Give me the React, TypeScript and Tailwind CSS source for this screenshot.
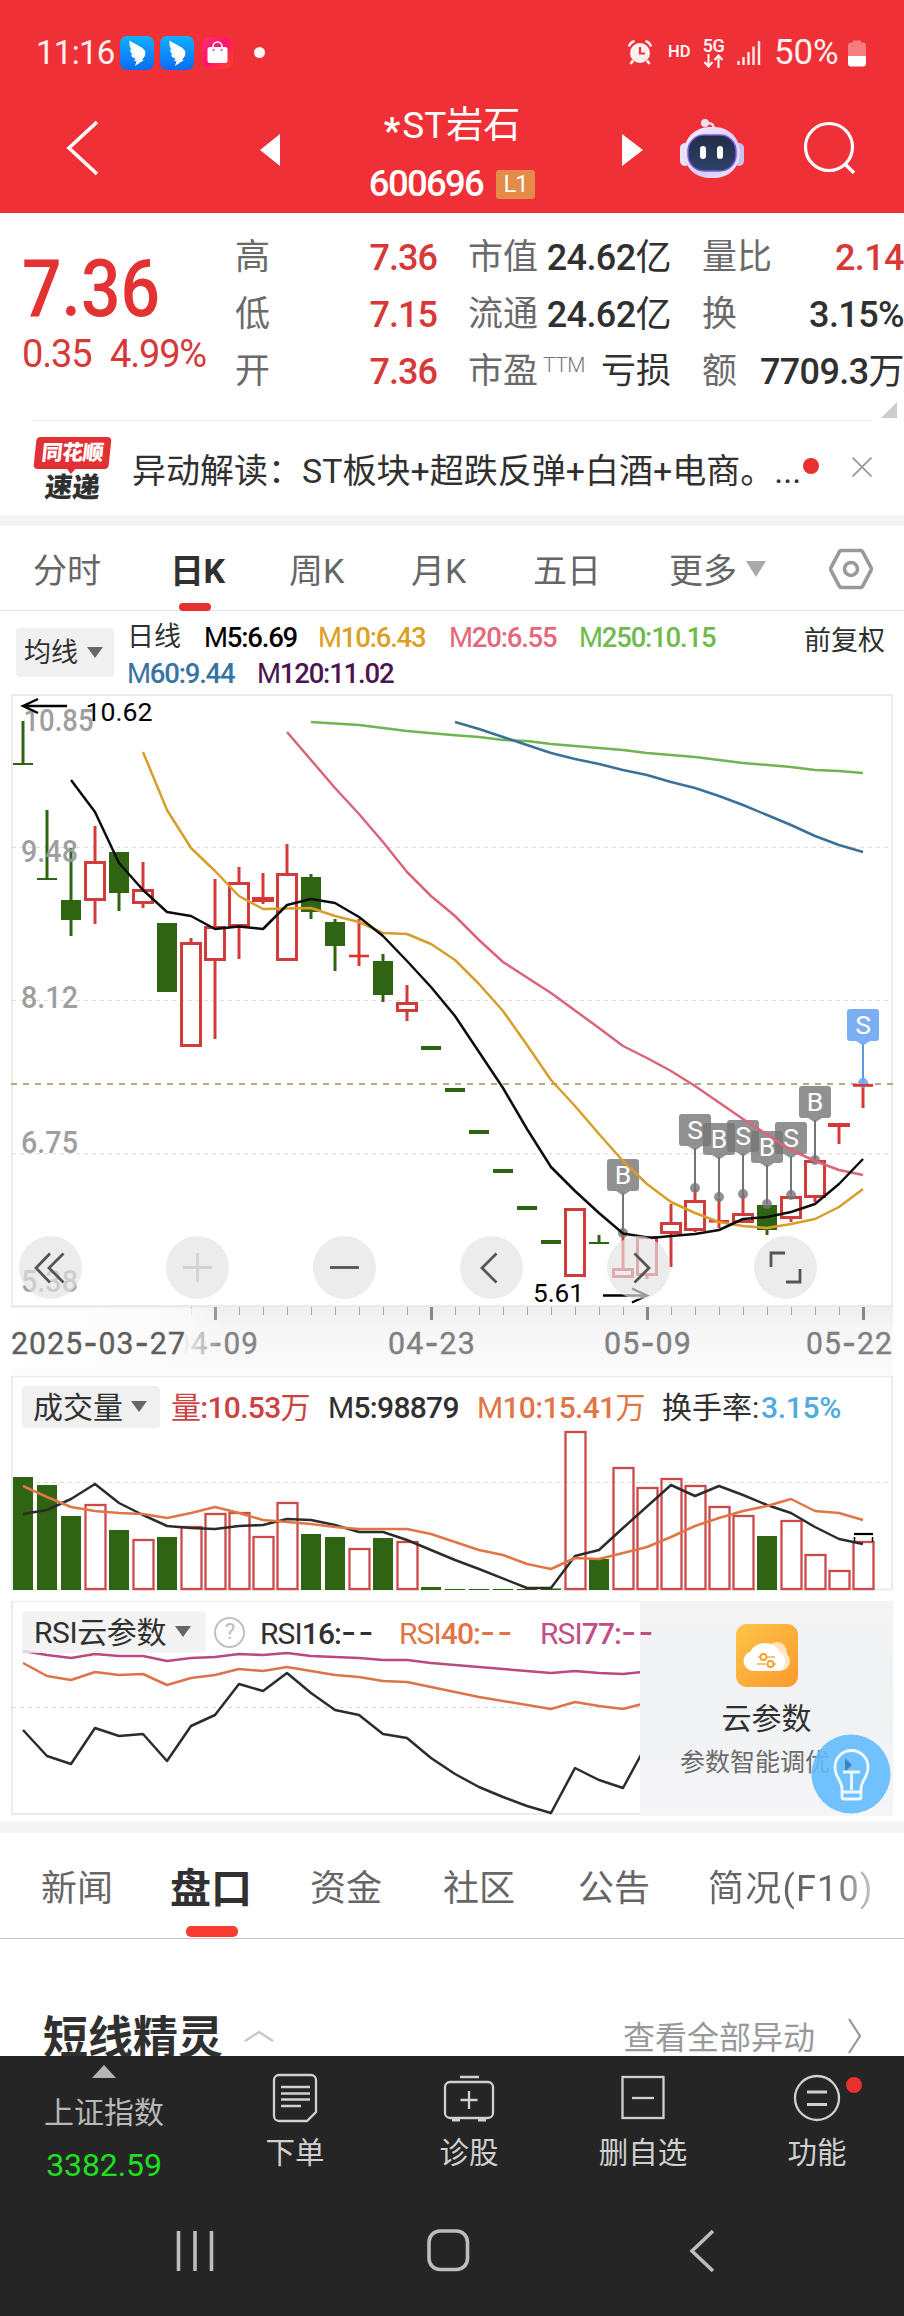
import React from 'react';

const FONT = "font-['Roboto','Noto_Sans_CJK_SC',sans-serif]";
const RED = '#d03c3c';
const GREEN = '#2f6413';
const cx = (i: number) => 23 + 24 * i;

type Candle = { k: 'g' | 'r' | 'f'; hi: number; lo: number; t: number; b: number };
const c = (k: Candle['k'], hi: number, lo: number, t: number, b: number): Candle => ({ k, hi, lo, t, b });

/* k: g = filled green, r = hollow red, f = filled red */
const candles: Candle[] = [
  c('g', 721, 764, 763, 765), c('g', 810, 879, 878, 880), c('g', 848, 936, 900, 920), c('r', 826, 924, 861, 901),
  c('g', 852, 911, 852, 893), c('r', 862, 908, 889, 904), c('g', 923, 992, 923, 992), c('r', 938, 1047, 942, 1047),
  c('r', 879, 1039, 926, 961), c('r', 867, 959, 882, 927), c('f', 873, 904, 897, 902), c('r', 844, 961, 873, 961),
  c('g', 874, 919, 877, 912), c('g', 919, 971, 922, 946), c('f', 919, 966, 954.7, 957.3), c('g', 954, 1002, 961, 995),
  c('r', 985, 1021, 1002, 1012), c('g', 1046, 1050, 1046, 1050), c('g', 1088, 1092, 1088, 1092), c('g', 1130, 1134, 1130, 1134),
  c('g', 1169, 1173, 1169, 1173), c('g', 1206, 1210, 1206, 1210), c('g', 1240, 1244, 1240, 1244), c('r', 1208, 1277, 1208, 1277),
  c('g', 1235, 1244, 1242, 1244), c('r', 1235, 1278, 1268, 1278), c('r', 1236, 1279, 1236, 1276), c('r', 1204, 1267, 1222, 1234),
  c('r', 1188, 1232, 1200, 1231), c('f', 1198, 1228, 1220, 1222.5), c('r', 1194, 1223, 1213, 1223), c('g', 1205, 1235, 1205, 1230),
  c('r', 1196, 1222, 1196, 1219), c('r', 1160, 1202, 1160, 1198), c('f', 1123, 1144, 1123, 1127), c('f', 1084, 1108, 1084, 1086.5),
];

const volumes: [string, number][] = [
  ['g', 1477], ['g', 1485], ['g', 1516], ['r', 1504], ['g', 1530], ['r', 1539], ['g', 1537], ['r', 1526], ['r', 1513],
  ['r', 1512], ['r', 1536], ['r', 1502], ['g', 1534], ['g', 1537], ['r', 1548], ['g', 1538], ['r', 1541], ['g', 1587],
  ['g', 1589], ['g', 1589], ['g', 1589], ['g', 1589], ['g', 1588.5], ['r', 1431], ['g', 1559], ['r', 1467], ['r', 1487],
  ['r', 1478], ['r', 1485], ['r', 1506], ['r', 1515], ['g', 1536], ['r', 1520], ['r', 1554], ['r', 1570], ['r', 1541],
];

const markers: [string, number, number, number][] = [
  ['B', 623, 1159, 1233], ['S', 695, 1114, 1188], ['B', 719, 1123, 1197], ['S', 743, 1120, 1194],
  ['B', 767, 1131, 1204], ['S', 791, 1122, 1195], ['B', 815, 1086, 1160],
];

const Line = ({ p, s, w = 2.5 }: { p: string; s: string; w?: number }) => (
  <polyline points={p} fill="none" stroke={s} strokeWidth={w} strokeLinejoin="round" />
);

function CandleShape({ d, i }: { d: Candle; i: number }) {
  const x = cx(i);
  const col = d.k === 'g' ? GREEN : d.k === 'f' ? '#d93636' : RED;
  return (
    <g>
      <line x1={x} x2={x} y1={d.hi} y2={d.k === 'r' ? d.t : d.lo} stroke={col} strokeWidth="3" />
      {d.k === 'r' && <line x1={x} x2={x} y1={d.b} y2={d.lo} stroke={col} strokeWidth="3" />}
      {d.k === 'r' ? (
        <rect x={x - 9.5} y={d.t + 1.5} width="19" height={d.b - d.t - 3} fill="none" stroke={col} strokeWidth="3" />
      ) : (
        <rect x={x - (i === 10 || i === 34 ? 11 : 10)} y={d.t} width={i === 10 || i === 34 ? 22 : 20} height={d.b - d.t} fill={col} />
      )}
    </g>
  );
}

function Marker({ m, fill, stem }: { m: [string, number, number, number]; fill: string; stem: string }) {
  const [ch, x, y, dot] = m;
  return (
    <g>
      <line x1={x} x2={x} y1={y + 34} y2={dot} stroke={stem} strokeWidth="1.8" />
      <circle cx={x} cy={dot} r="5" fill={fill} />
      <path d={`M${x - 13} ${y}h26a3 3 0 0 1 3 3v26a3 3 0 0 1-3 3h-6l-7 4.500l-7-4.500h-6a3 3 0 0 1-3-3v-26a3 3 0 0 1 3-3z`} fill={fill} />
      <text x={x} y={y + 25} textAnchor="middle" fontSize="26.5" fill="#fff">{ch}</text>
    </g>
  );
}

function Label({ x, y, w, size, fill, children, weight = 500 }: { x: number; y: number; w: number; size: number; fill: string; children: string; weight?: number }) {
  return <text x={x} y={y} textLength={w} lengthAdjust="spacingAndGlyphs" fontSize={size} fill={fill} fontWeight={weight}>{children}</text>;
}

function DateLabel({ x, y, w, fill, parts, weight = 400 }: { x: number; y: number; w: number; fill: string; parts: string[]; weight?: number }) {
  return (
    <text x={x} y={y} textLength={w} lengthAdjust="spacingAndGlyphs" fontSize="32" fill={fill} fontWeight={weight} stroke={fill} strokeWidth=".4" letterSpacing="1.2">
      {parts.map((p, i) => (
        <React.Fragment key={i}>
          {i > 0 && <tspan fontFamily="Inter" fontWeight="500">-</tspan>}
          {p}
        </React.Fragment>
      ))}
    </text>
  );
}

const Down = ({ className, fill = '#666' }: { className: string; fill?: string }) => (
  <svg className={className} viewBox="0 0 16 12" preserveAspectRatio="none"><path d="M0 0h16L8 12z" fill={fill} /></svg>
);

/* Figures are set in medium weight, the unit characters in regular. */
const Num = ({ v }: { v: string }) => (
  <>
    {v.split(/([\u4e00-\u9fff]+)/).filter(Boolean).map((p, i) => (
      <span key={i} className={/[\u4e00-\u9fff]/.test(p) ? 'font-normal' : 'font-medium'}>{p}</span>
    ))}
  </>
);

const Bird = ({ className }: { className: string }) => (
  <svg className={className} viewBox="0 0 34 34">
    <defs><linearGradient id="sky" x1="0" y1="0" x2="0" y2="1"><stop stopColor="#10b0ff" /><stop offset="1" stopColor="#0a6bf5" /></linearGradient></defs>
    <rect width="34" height="34" rx="7" fill="url(#sky)" />
    <path d="M9.500 4.500C14 8 20 9.500 23.500 13c2 2 2.500 4 1.300 7L22 24h2l-9 6 1.500-5h-2.500l1.500-2.500c-3-.5-4-2-4.500-4l2 .3c-2-1.600-3-3.300-3-5.300l1.800.8C9.800 11.500 9 8 9.500 4.500z" fill="#fff" />
  </svg>
);

function StatusBar() {
  return (
    <div className="flex h-[95px] items-center pt-[10px] text-white">
      <span className="ml-[36px] w-[84px] text-[33px] leading-none tracking-[-0.700px] text-[#fff0f0]">11:16</span>
      <Bird className="h-[34px] w-[34px]" />
      <Bird className="ml-[6px] h-[34px] w-[34px]" />
      <svg className="ml-[8px] h-[32px] w-[31px]" viewBox="0 0 31 32">
        <defs><linearGradient id="bag" x1="0" y1="0" x2="1" y2="1"><stop stopColor="#ff2d78" /><stop offset=".5" stopColor="#ff1466" /><stop offset="1" stopColor="#ff4a1c" /></linearGradient></defs>
        <rect width="31" height="32" rx="9" fill="url(#bag)" />
        <path d="M11 12V9.500a4.500 4.500 0 0 1 9 0V12" fill="none" stroke="#fff" strokeWidth="1.600" />
        <rect x="5.500" y="10" width="20" height="16" rx="2.500" fill="#fff" />
        <circle cx="11.500" cy="13" r="1" fill="#f36" /><circle cx="19.500" cy="13" r="1" fill="#f36" />
      </svg>
      <span className="ml-[21px] h-[11px] w-[11px] rounded-full bg-[#fff3f3]" />
      <svg className="ml-[362px] h-[27px] w-[26px]" viewBox="0 0 26 27">
        <circle cx="13" cy="14" r="10" fill="#fff0f0" />
        <path d="M2 7.500A8 8 0 0 1 7.500 2M24 7.500A8 8 0 0 0 18.500 2M6 21.500 3.500 25M20 21.500 22.500 25" stroke="#fff0f0" strokeWidth="2.600" fill="none" />
        <path d="M13 8v6.500h5" stroke="#f03037" strokeWidth="2.200" fill="none" />
      </svg>
      <span className="ml-[15px] w-[34px] text-[16.500px] font-medium leading-none">HD</span>
      <span className="flex w-[23px] flex-col items-center">
        <span className="text-[18px] font-medium leading-[17px] tracking-[-0.500px]">5G</span>
        <svg className="h-[14px] w-[21px]" viewBox="0 0 21 14"><path d="M5.500 0v12M1.500 8l4 4.500 4-4.500M15.500 14V2M11.500 6l4-4.500 4 4.500" stroke="#fff" strokeWidth="2" fill="none" /></svg>
      </span>
      <svg className="ml-[12px] h-[25px] w-[25px]" viewBox="0 0 25 25"><path d="M1.500 21v4M6.500 17v8M11.500 12v13M16.500 6.500V25M22 1v24" stroke="#ffecec" strokeWidth="2.400" /></svg>
      <span className="ml-[12px] w-[74px] text-[35px] leading-none tracking-[-0.200px] text-[#fff0f0]">50%</span>
      <svg className="h-[28px] w-[18px]" viewBox="0 0 18 28">
        <path d="M5 3.500V1.500h8v2h2a3 3 0 0 1 3 3V17H0V6.500a3 3 0 0 1 3-3z" fill="#f67c80" />
        <path d="M0 17h18v7.500a3 3 0 0 1-3 3H3a3 3 0 0 1-3-3z" fill="#fff" />
      </svg>
    </div>
  );
}

function Header() {
  return (
    <header className="h-[213px] bg-[#f03037]">
      <StatusBar />
      <div className="flex h-[106px] items-center text-white">
        <svg className="ml-[66px] h-[56px] w-[33px]" viewBox="0 0 33 56"><path d="M31 2 3 28l28 26" fill="none" stroke="#fff" strokeWidth="3.600" /></svg>
        <svg className="ml-[161px] mt-[4px] h-[32px] w-[20px]" viewBox="0 0 20 32"><path d="M20 0v32L0 16z" fill="#fff" /></svg>
        <div className="ml-[80px] flex w-[184px] flex-col items-center self-start">
          <div className="flex h-[60px] items-center text-[37px] leading-none"><span className="mr-[2px] mt-[11px] text-[36px] font-bold">*</span>ST岩石</div>
          <div className="flex h-[58px] items-center">
            <span className="text-[36.500px] font-medium leading-none tracking-[-1.700px]">600696</span>
            <span className="ml-[13px] flex h-[29px] w-[39px] items-center justify-center rounded-[3px] bg-[#e38b48] text-[24px] leading-none tracking-[-1px]">L1</span>
          </div>
        </div>
        <svg className="ml-[78px] mt-[4px] h-[32px] w-[21px]" viewBox="0 0 21 32"><path d="M0 0v32l21-16z" fill="#fff" /></svg>
        <svg className="ml-[37px] h-[60px] w-[64px]" viewBox="0 0 64 60">
          <defs>
            <linearGradient id="shell" x1="0" y1="0" x2="1" y2="1"><stop stopColor="#f7f2ff" /><stop offset=".6" stopColor="#d9cdf7" /><stop offset="1" stopColor="#eceaff" /></linearGradient>
            <linearGradient id="visor" x1="0" y1="0" x2="0" y2="1"><stop stopColor="#232c48" /><stop offset="1" stopColor="#2c4468" /></linearGradient>
          </defs>
          <path d="M33 11c1.500-4-1-6-6-6" fill="none" stroke="#ead9f5" strokeWidth="2.500" /><circle cx="25" cy="5" r="4" fill="#f1def0" />
          <rect x="0" y="25" width="10" height="23" rx="5" fill="#e9e2fb" /><rect x="54" y="25" width="10" height="23" rx="5" fill="#c9bff2" />
          <rect x="4" y="9" width="56" height="51" rx="25" fill="url(#shell)" />
          <rect x="8" y="17" width="48" height="36" rx="16" fill="url(#visor)" stroke="#7a5be0" strokeWidth="1.500" />
          <rect x="20" y="28" width="6" height="13" rx="3" fill="#fff" /><rect x="37" y="28" width="6" height="13" rx="3" fill="#fff" />
        </svg>
        <svg className="ml-[59px] h-[54px] w-[54px]" viewBox="0 0 54 54"><circle cx="26" cy="26" r="23.500" fill="none" stroke="#fff" strokeWidth="3.200" /><path d="m42 43 9 9" stroke="#fff" strokeWidth="3.600" /></svg>
      </div>
    </header>
  );
}

const statRows: [string, string, string, string, string, string, string][] = [
  ['高', '7.36', '市值', '24.62亿', '量比', '2.14', 'text-[#d73838]'],
  ['低', '7.15', '流通', '24.62亿', '换', '3.15%', 'text-[#303030]'],
  ['开', '7.36', '市盈', '亏损', '额', '7709.3万', 'text-[#303030]'],
];

function Quote() {
  return (
    <section className="flex h-[207px] text-[35px] leading-none">
      <div className="w-[235px] pl-[22px] pt-[35px] text-[#e23232]">
        <div className="h-[82px] origin-left scale-x-[0.865] text-[80.500px] font-medium leading-[82px]">7.36</div>
        <div className="mt-[3px] flex text-[38px] leading-[42px] tracking-[-1.200px] text-[#d73838]"><span className="w-[88px]">0.35</span><span>4.99%</span></div>
      </div>
      <div className="w-[669px] pt-[16px]">
        {statRows.map((r, i) => (
          <div key={i} className="flex h-[57px] items-center">
            <span className="w-[101px] text-[#6a6a6a]">{r[0]}</span>
            <span className="w-[101px] text-right text-[36px] font-medium tracking-[-1px] text-[#d73838]">{r[1]}</span>
            <span className="ml-[31px] w-[75px] text-[#6a6a6a]">{r[2]}</span>
            {i === 2 && <span className="mb-[12px] w-[38px] text-[21px] font-light tracking-[-0.500px] text-[#777]">TTM</span>}
            <span className={i === 2 ? 'w-[90px] text-right text-[#303030]' : 'flex w-[128px] justify-end text-[36px] tracking-[-0.600px] text-[#303030]'}><Num v={r[3]} /></span>
            <span className="ml-[31px] w-[72px] shrink-0 text-[#6a6a6a]">{r[4]}</span>
            <span className={`${r[6]} flex w-[130px] justify-end text-[36px] tracking-[-0.600px]`}><Num v={r[5]} /></span>
          </div>
        ))}
        <svg className="ml-[646px] mt-[2px] h-[16px] w-[16px]" viewBox="0 0 16 16"><path d="M16 0v16H0z" fill="#ccc" /></svg>
      </div>
    </section>
  );
}

function News() {
  return (
    <section className="mx-[32px] flex h-[95px] items-center border-t border-[#ececec] pt-[5px] text-[34px] text-[#303030]">
      <div className="flex w-[80px] flex-col items-center pb-[4px]">
        <div className="relative flex h-[32px] w-[75px] -skew-x-6 items-center justify-center rounded-[4px] bg-[#e23135] text-[21px] font-black leading-none tracking-[-0.500px] text-white">
          同花顺
          <svg className="absolute left-[33px] top-[31px] h-[6px] w-[10px]" viewBox="0 0 10 6"><path d="M0 0h10L5 6z" fill="#e23135" /></svg>
        </div>
        <div className="mt-[5px] -skew-x-6 text-[27.500px] font-black leading-[27px]">速递</div>
      </div>
      <span className="ml-[20px] w-[671px] leading-none">异动解读：ST板块+超跌反弹+白酒+电商。...</span>
      <span className="mb-[9px] h-[16px] w-[16px] shrink-0 rounded-full bg-[#e83030]" />
      <svg className="mb-[7px] ml-[33px] h-[20px] w-[20px] shrink-0" viewBox="0 0 20 20"><path d="m.5.5 19 19M19.500.5l-19 19" stroke="#999" strokeWidth="1.800" /></svg>
    </section>
  );
}

function PeriodTabs() {
  return (
    <nav className="flex h-[85px] items-center border-b border-[#e4e4e4] pb-0 pt-[6px] text-[34px] leading-none text-[#666]">
      <span className="ml-[33px] w-[137px]">分时</span>
      <span className="relative w-[119px] font-bold tracking-[-0.500px] text-[#303030]">日K<i className="absolute left-[9px] top-[49px] h-[8px] w-[32px] rounded-[4px] bg-[#e63131]" /></span>
      <span className="w-[122px]">周K</span>
      <span className="w-[122px]">月K</span>
      <span className="w-[136px]">五日</span>
      <span className="w-[77px]">更多</span>
      <Down className="mb-[5px] h-[16px] w-[20px]" fill="#aaa" />
      <svg className="mb-[4px] ml-[63px] h-[42px] w-[44px]" viewBox="0 0 44 42"><path d="M12.500 2.500h19a2.500 2.500 0 0 1 2.200 1.300L42 19.700a2.500 2.500 0 0 1 0 2.600l-8.300 15.900a2.500 2.500 0 0 1-2.200 1.300h-19a2.500 2.500 0 0 1-2.200-1.300L2 22.300a2.500 2.500 0 0 1 0-2.600l8.300-15.900a2.500 2.500 0 0 1 2.200-1.300z" fill="none" stroke="#999" strokeWidth="3.600" /><circle cx="22" cy="21" r="6.500" fill="none" stroke="#999" strokeWidth="3.600" /></svg>
    </nav>
  );
}

const Ma = ({ n, v, className }: { n: string; v: string; className: string }) => (
  <span className={className}>{n}<b className="font-medium">{v}</b></span>
);

function MaRow() {
  return (
    <section className="flex h-[83px] text-[27.500px] leading-none tracking-[-1.200px]">
      <div className="ml-[16px] mt-[17px] flex h-[49px] w-[98px] items-center rounded-[4px] bg-[#f0f0f0] pl-[8px] pt-[1px] text-[27px] tracking-normal text-[#303030]">均线<Down className="mb-[2px] ml-[9px] h-[11px] w-[16px]" /></div>
      <div className="ml-[13px] w-[677px]">
        <div className="flex h-[36px] items-center pt-[17px]">
          <span className="w-[77px] text-[27px] tracking-normal text-[#303030]">日线</span>
          <Ma n="M" v="5:6.69" className="w-[114px] text-black" />
          <Ma n="M" v="10:6.43" className="w-[131px] text-[#dc9f26]" />
          <Ma n="M" v="20:6.55" className="w-[130px] text-[#e4687a]" />
          <Ma n="M" v="250:10.15" className="text-[#6dbb4c]" />
        </div>
        <div className="flex h-[36px] items-center pt-[17px]">
          <Ma n="M" v="60:9.44" className="w-[130px] text-[#3674a3]" />
          <Ma n="M" v="120:11.02" className="text-[#4d154f]" />
        </div>
      </div>
      <span className="pt-[17px] text-[27px] tracking-normal text-[#303030]">前复权</span>
    </section>
  );
}

function KChart() {
  const cy = 1267.5;
  return (
    <svg className="block h-[682px] w-[904px]" viewBox="0 694 904 682">
      <defs>
        <linearGradient id="axis" x1="0" y1="0" x2="0" y2="1"><stop stopColor="#efefef" /><stop offset=".35" stopColor="#f6f6f6" /><stop offset="1" stopColor="#fbfbfb" /></linearGradient>
        <linearGradient id="fade" x1="0" y1="0" x2="1" y2="0"><stop stopColor="#fff" /><stop offset=".81" stopColor="#fafafa" /><stop offset="1" stopColor="#fafafa" stopOpacity="0" /></linearGradient>
      </defs>
      <rect x="12" y="1307" width="881" height="69" fill="url(#axis)" />
      <rect x="12" y="695" width="880" height="611" fill="#fff" stroke="#ebebeb" strokeWidth="2" />
      <path d="M12 847.300H892M12 1000.500H892M12 1153.700H892" stroke="#dfdfdf" strokeWidth="1.200" strokeDasharray="4 4" />
      <path d="M11 1084H893" stroke="#b8a987" strokeWidth="1.800" strokeDasharray="6 6" />
      {candles.map((d, i) => <CandleShape key={i} d={d} i={i} />)}
      {markers.map((m, i) => <Marker key={i} m={m} fill="rgba(118,118,118,.8)" stem="#666" />)}
      <Marker m={['S', 863, 1009, 1083]} fill="rgba(112,168,240,.92)" stem="#4d90d8" />
      <path d="M853 1085.300h20" stroke="#d93636" strokeWidth="2.600" />
      <Line s="#6fb551" p="311,722 335,723.500 359,725 383,728 407,731 452,735 479,737 503,740 527,741 551,744 599,748 623,750 647,753 695,757 743,763 791,767 815,770 839,771 863,773" />
      <Line s="#3a719b" p="455,722 479,729 503,737 527,745 551,753 575,759 599,764 623,770 647,775 671,782 695,788 719,796 743,805 767,815 791,825 815,836 839,845 863,852" />
      <Line s="#d9657a" p="287,732 311,760 335,788 359,814 383,842 407,872 431,896 455,916 479,940 503,962 551,993 599,1028 623,1046 647,1058 671,1071 695,1086 743,1119 791,1150 815,1161 839,1170 863,1175" />
      <Line s="#d79e2a" p="143,752 167,810 191,848 215,871 239,896 263,909 311,908 335,916 359,922 383,933 407,934 431,944 455,960 479,984 503,1011 527,1045 551,1080 575,1106 599,1134 623,1161 647,1184 671,1202 695,1213 719,1222 743,1226 767,1228 791,1224 815,1219 839,1207 863,1189" />
      <Line s="#0d0d0d" p="71,780 95,812 119,863 143,890 167,912 191,916 215,929 239,926.500 263,929 287,905 311,899 335,903 359,917 383,936 407,961 431,987 455,1016 479,1052 503,1088 527,1129 551,1167 575,1191 599,1213 623,1233.500 651,1238 671,1236 695,1234 719,1230 743,1219 767,1217 791,1212 815,1204 839,1184 863,1159" />
      <g fillOpacity=".95">
        <Label x={23.500} y={731} w={70} size={31} fill="#999">10.85</Label>
        <Label x={21} y={862} w={57} size={31} fill="#999">9.48</Label>
        <Label x={21} y={1008} w={57} size={31} fill="#999">8.12</Label>
        <Label x={21} y={1153} w={57} size={31} fill="#999">6.75</Label>
        <Label x={21} y={1292} w={57} size={31} fill="#999">5.38</Label>
      </g>
      <Label x={85.500} y={721} w={67} size={26.500} fill="#000" weight={400}>10.62</Label>
      <path d="M67 706H24M38 699 23 706l15 7" fill="none" stroke="#000" strokeWidth="2.400" />
      <Label x={533} y={1302} w={51} size={26.500} fill="#000" weight={400}>5.61</Label>
      <path d="M603 1295.500h43M632 1288.500l15 7-15 7" fill="none" stroke="#000" strokeWidth="2.400" />
      {[50.500, 197.500, 344.500, 491.500, 638.500, 785.500].map((x) => <circle key={x} cx={x} cy={cy} r="31.500" fill="rgba(227,227,227,.68)" />)}
      <g fill="none" stroke="#555" strokeWidth="2.800">
        <path d="M50 1253.500 36 1268l14 14.500M63.500 1253.500 49 1268l14.500 14.500" />
        <path d="M330 1267.500h29" />
        <path d="M496.500 1253.500 482 1268l14.500 14.500" />
        <path d="M634.500 1253.500 649 1268l-14.500 14.500" />
        <path d="M771 1267v-14h14M800 1269v13h-14" />
        <path d="M183 1267.500h29M197.500 1253v29" stroke="#d2d2d2" />
      </g>
      {Array.from({ length: 29 }, (_, k) => 7 + k).map((i) => {
        const major = (i - 8) % 9 === 0;
        return <line key={i} x1={cx(i) + 0.500} x2={cx(i) + 0.500} y1="1307" y2={major ? 1320 : 1315} stroke={major ? '#888' : '#a5a5a5'} strokeWidth={major ? 3 : 1} />;
      })}
      <DateLabel x={173} y={1354} w={86} fill="#858585" parts={['04', '09']} />
      <rect x="12" y="1308" width="212" height="60" fill="url(#fade)" fillOpacity=".97" />
      <DateLabel x={11} y={1354} w={175} fill="#5f5f5f" parts={['2025', '03', '27']} />
      <line x1="215.500" x2="215.500" y1="1307" y2="1320" stroke="#999" strokeWidth="3" />
      <DateLabel x={388} y={1354} w={88} fill="#808080" parts={['04', '23']} />
      <DateLabel x={604} y={1354} w={88} fill="#808080" parts={['05', '09']} />
      <DateLabel x={806} y={1354} w={87} fill="#808080" parts={['05', '22']} />
    </svg>
  );
}

function VolumePanel() {
  return (
    <section className="relative h-[225px]">
      <svg className="absolute left-0 top-0 h-[216px] w-[904px]" viewBox="0 1376 904 216">
        <rect x="12" y="1376" width="880" height="213.500" fill="#fff" stroke="#ebebeb" strokeWidth="2" />
        <path d="M12 1482.500H892" stroke="#dcdcdc" strokeWidth="1.200" strokeDasharray="4 4" />
        {volumes.map(([k, t], i) => k === 'g'
          ? <rect key={i} x={cx(i) - 10} y={t} width="20" height={1590 - t} fill={GREEN} />
          : <rect key={i} x={cx(i) - 9.500} y={t + 1} width="20" height={1588 - t} fill="none" stroke="#cd4a4a" strokeWidth="2.300" />)}
        <path d="M854 1534h19" stroke="#000" strokeWidth="2.200" /><path d="M854.500 1537v5M872.500 1537v5" stroke="#000" strokeWidth="1.500" />
        <Line s="#2c2c2c" p="23,1514 47,1510 71,1499 95,1484 119,1503 143,1515 167,1526 191,1528 215,1529 239,1526 263,1525 287,1519 311,1520 335,1525 359,1532 383,1532 407,1540 455,1560 479,1569 527,1588 551,1588 575,1556 599,1550 623,1528 671,1485 695,1496 719,1486 743,1495 767,1505 791,1513 815,1527 839,1539 863,1544" />
        <Line s="#e07545" p="23,1486 47,1497 71,1507 95,1511 119,1513 143,1514 167,1518 191,1513 215,1507 239,1513 263,1520 311,1524 335,1527 359,1529 407,1529 431,1534 455,1542 479,1550 503,1555 527,1564 551,1569 575,1558 599,1559 623,1553 647,1547 671,1537 695,1526 719,1518 743,1511 767,1506 791,1499 815,1511 839,1513 863,1520" />
      </svg>
      <div className="relative flex pt-[10px] text-[30px] leading-none text-[#303030]">
        <div className="ml-[22px] flex h-[42px] w-[138px] items-center rounded-[4px] bg-[#f0f0f0] pl-[11px] pt-[1px]">成交量<Down className="mb-[2px] ml-[8px] h-[11px] w-[16px]" /></div>
        <div className="ml-[11px] flex h-[44px] items-center tracking-[-0.700px]">
          <span className="w-[157px] text-[#cc4242]"><Num v="量:10.53万" /></span>
          <span className="w-[149px]">M<b className="font-medium">5:98879</b></span>
          <span className="w-[185px] text-[#e07545]">M<Num v="10:15.41万" /></span>
          <span className="w-[99px] font-normal tracking-normal">换手率:</span>
          <span className="font-medium tracking-[-0.300px] text-[#4fabdf]">3.15%</span>
        </div>
      </div>
    </section>
  );
}

const Rsi = ({ n, className }: { n: string; className: string }) => (
  <span className={className}>RSI<b className="font-medium">{n}:</b><b className="font-['Inter'] text-[33px] font-medium leading-none tracking-[2px]">--</b></span>
);

function RsiPanel() {
  return (
    <section className="relative h-[221px]">
      <svg className="absolute left-0 top-0 h-[216px] w-[904px]" viewBox="0 1600 904 216">
        <rect x="12" y="1600" width="880" height="213" fill="#fff" stroke="#ebebeb" strokeWidth="2" />
        <path d="M12 1706.500H892" stroke="#dcdcdc" strokeWidth="1.200" strokeDasharray="4 4" />
        <g transform="translate(0 -1)">
          <Line s="#b84a7f" p="23,1651 47,1655 71,1658 95,1654 119,1656 143,1656 167,1661 191,1658 215,1657 239,1654 263,1655 287,1653 311,1656 359,1658 383,1660 407,1660 431,1663 503,1669 551,1673 575,1671 599,1673 623,1674 642,1672" />
          <Line s="#dd7349" p="23,1663 47,1676 71,1680 95,1672 119,1675 143,1674 167,1685 191,1678 215,1675 239,1669 263,1671 287,1667 335,1675 359,1677 383,1681 407,1682 479,1697 551,1709 575,1702 599,1706 623,1709 642,1704" />
          <Line s="#2c2c2c" p="23,1730 47,1756 71,1764 95,1728 119,1736 143,1734 167,1761 191,1726 215,1715 239,1684 263,1691 287,1673 311,1693 335,1710 359,1715 383,1734 407,1738 431,1758 455,1774 479,1787 503,1797 527,1806 551,1813 575,1768 599,1780 623,1788 642,1753" />
        </g>
      </svg>
      <div className="absolute left-[640px] top-0 flex h-[215px] w-[253px] flex-col items-center bg-linear-to-b from-[#f4f4f5] via-[#f0f2f3] to-[#f6f5f8] pt-[23px] leading-none">
        <svg className="h-[63px] w-[62px]" viewBox="0 0 62 63">
          <defs><linearGradient id="amber" x1="0" y1="0" x2="1" y2="1"><stop stopColor="#fec44a" /><stop offset="1" stopColor="#fb9a2c" /></linearGradient></defs>
          <rect width="62" height="63" rx="11" fill="url(#amber)" />
          <circle cx="41" cy="28" r="10" fill="#ffe3b8" /><circle cx="44" cy="37" r="10" fill="#ffe9c9" />
          <path d="M17 47a10 10 0 0 1-2.500-19.500 15 12 0 0 1 29 1A10 10 0 0 1 42 47z" fill="#fff" />
          <path d="M22 33h3m6 0h8M21 40h9m6 0h4" stroke="#fbb04a" strokeWidth="1.600" /><circle cx="27.500" cy="33" r="3" fill="none" stroke="#f5a02c" strokeWidth="1.800" /><circle cx="34.500" cy="40" r="3" fill="none" stroke="#f5a02c" strokeWidth="1.800" />
        </svg>
        <div className="mt-[17px] text-[30px] text-[#303030]">云参数</div>
        <div className="mt-[16px] self-start pl-[40px] text-[25px] text-[#6b6b6b]">参数智能调优</div>
      </div>
      <svg className="absolute left-[811px] top-[133px] h-[80px] w-[80px]" viewBox="0 0 80 80">
        <circle cx="40" cy="40" r="39.500" fill="#62bbfd" fillOpacity=".9" />
        <path d="M34 24v14l7-7z" fill="#3d87c4" />
        <path d="M31 55c0-9-7-11-7-22a16.500 16.500 0 0 1 33 0c0 11-7 13-7 22v8a2 2 0 0 1-2 2H33a2 2 0 0 1-2-2zM31 58h19M32 38h17M40.500 38v18" fill="none" stroke="#effaff" strokeWidth="2.800" strokeLinejoin="round" />
      </svg>
      <div className="relative flex pt-[10px] text-[30px] leading-none text-[#303030]">
        <div className="ml-[22px] flex h-[42px] w-[184px] items-center rounded-[4px] bg-[#f0f0f0]/80 pl-[12px] pt-[1px] tracking-[-0.400px]">RSI云参数<Down className="mb-[2px] ml-[9px] h-[11px] w-[16px]" /></div>
        <div className="flex h-[42px] items-center tracking-[-0.900px]">
          <span className="ml-[8px] flex h-[31px] w-[31px] items-center justify-center rounded-full border-2 border-[#c0c0c0] text-[22px] text-[#bbb]">?</span>
          <Rsi n="16" className="ml-[15px] w-[139px]" />
          <Rsi n="40" className="w-[141px] text-[#e07545]" />
          <Rsi n="77" className="text-[#c24e86]" />
        </div>
      </div>
    </section>
  );
}

function InfoTabs() {
  return (
    <nav className="flex h-[106px] items-center border-b border-[#c4c4c4] pt-[7px] text-[36px] leading-none text-[#666]">
      <span className="ml-[41px] w-[129px]">新闻</span>
      <span className="relative w-[140px] text-[41px] font-bold text-[#303030]">盘口<i className="absolute left-[16px] top-[57px] h-[11px] w-[52px] rounded-[5px] bg-[#f93b30]" /></span>
      <span className="w-[133px]">资金</span>
      <span className="w-[135px]">社区</span>
      <span className="w-[130px]">公告</span>
      <span className="bg-linear-to-r from-[#666] from-75% to-[#ccc] bg-clip-text py-[10px] tracking-[1.200px] text-transparent">简况(F10)</span>
    </nav>
  );
}

function ShortTerm() {
  return (
    <section className="h-[117px] overflow-hidden">
      <div className="mt-[71px] flex h-[56px] items-center leading-none">
        <span className="ml-[43px] w-[201px] text-[45px] font-bold text-[#303030]">短线精灵</span>
        <svg className="mb-[4px] h-[12px] w-[30px]" viewBox="0 0 30 12"><path d="M1 11 15 2l14 9" fill="none" stroke="#c8c8c8" strokeWidth="2.400" /></svg>
        <span className="ml-[349px] w-[225px] text-[32px] text-[#999]">查看全部异动</span>
        <svg className="mb-[5px] h-[36px] w-[14px]" viewBox="0 0 14 36"><path d="m1 1 11 17L1 35" fill="none" stroke="#999" strokeWidth="2.200" /></svg>
      </div>
    </section>
  );
}

function Action({ label, className, children }: { label: string; className: string; children: React.ReactNode }) {
  return (
    <div className={`${className} flex flex-col items-center`}>
      <svg className="mt-[17px] h-[50px] w-[54px]" viewBox="0 0 54 50" fill="none" stroke="#d0d0d0" strokeWidth="2.300">{children}</svg>
      <span className="mt-[16px] text-[29.500px] leading-none">{label}</span>
    </div>
  );
}

function BottomBar() {
  return (
    <footer className="h-[260px] bg-[#252525] text-[#d0d0d0]">
      <div className="flex h-[151px]">
        <div className="flex w-[208px] flex-col items-center pt-[9px] leading-none">
          <svg className="h-[13px] w-[24px]" viewBox="0 0 24 13"><path d="M12 0l12 13H0z" fill="#b5b5b5" /></svg>
          <span className="mt-[20px] text-[30px] text-[#b8b8b8]">上证指数</span>
          <span className="mt-[21px] text-[32px] tracking-[-0.100px] text-[#1fe01f]">3382.59</span>
        </div>
        <Action label="下单" className="w-[174px]">
          <path d="M11 2h32a5 5 0 0 1 5 5v32l-9 9H11a5 5 0 0 1-5-5V7a5 5 0 0 1 5-5zM13 14h29M13 20.500h29M13 26.500h29M13 33h20" />
        </Action>
        <Action label="诊股" className="w-[174px]">
          <rect x="3" y="9" width="48" height="36" rx="5" /><path d="M18 4h19M27 18v18M18.500 27h17" /><path d="M10 47h8M36 47h8" strokeWidth="3" />
        </Action>
        <Action label="删自选" className="w-[174px]">
          <rect x="6.500" y="4" width="41" height="41" /><path d="M16 25h22" />
        </Action>
        <div className="relative">
          <Action label="功能" className="w-[174px]">
            <circle cx="27" cy="25" r="22" /><path d="M17 19h20M17 31.500h20" strokeWidth="2.800" />
          </Action>
          <i className="absolute left-[116px] top-[21px] h-[16px] w-[16px] rounded-full bg-[#e83030]" />
        </div>
      </div>
      <div className="flex h-[87px] items-center">
        <svg className="ml-[176px] h-[42px] w-[38px]" viewBox="0 0 38 42"><path d="M2.500 1v40M19 1v40M35.500 1v40" stroke="#bdbdbd" strokeWidth="3.600" /></svg>
        <svg className="ml-[213px] h-[43px] w-[43px]" viewBox="0 0 43 43"><rect x="2" y="2" width="38.500" height="38.500" rx="11" fill="none" stroke="#bdbdbd" strokeWidth="3.600" /></svg>
        <svg className="ml-[219px] h-[44px] w-[26px]" viewBox="0 0 26 44"><path d="M24 2 3 22l21 20" fill="none" stroke="#bdbdbd" strokeWidth="3.600" /></svg>
      </div>
    </footer>
  );
}

export default function App() {
  return (
    <main className={`${FONT} h-[2316px] w-[904px] overflow-hidden whitespace-nowrap bg-white`}>
      <Header />
      <Quote />
      <News />
      <div className="h-[11px] bg-[#f4f4f4]" />
      <PeriodTabs />
      <MaRow />
      <KChart />
      <VolumePanel />
      <RsiPanel />
      <div className="h-[11px] bg-[#f4f4f4]" />
      <InfoTabs />
      <ShortTerm />
      <BottomBar />
    </main>
  );
}
